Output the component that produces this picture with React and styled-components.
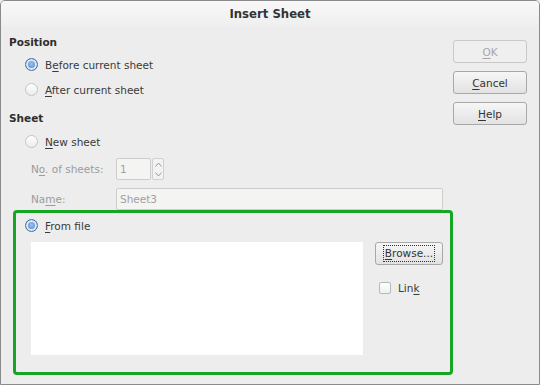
import React from 'react';
import styled, { createGlobalStyle } from 'styled-components';

const GlobalStyle = createGlobalStyle`
  html, body {
    margin: 0;
    padding: 0;
    background: #ededed;
  }
  body {
    font-family: "DejaVu Sans", "Liberation Sans", sans-serif;
    font-size: 10.5px;
    color: #3a3a3a;
  }
`;

const Frame = styled.div`
  width: 540px;
  height: 385px;
  box-sizing: border-box;
  border: 1px solid #8a8a8a;
  border-radius: 5px 5px 0 0;
  background: #ededed;
  overflow: hidden;
  display: flex;
  flex-direction: column;
`;

const TitleBar = styled.div`
  height: 25px;
  flex: none;
  display: flex;
  align-items: center;
  justify-content: center;
  background: linear-gradient(#f8f8f8, #efefef);
  font-weight: bold;
  font-size: 11.7px;
  color: #333;
`;

const Body = styled.div`
  flex: 1;
  display: flex;
`;

const LeftColumn = styled.div`
  width: 452px;
  display: flex;
  flex-direction: column;
`;

const RightColumn = styled.div`
  display: flex;
  flex-direction: column;
  gap: 8px;
  padding-top: 14px;
`;

const Heading = styled.div`
  height: 16px;
  line-height: 16px;
  padding-left: 8px;
  margin-top: ${({ $top }) => $top}px;
  margin-bottom: 2px;
  font-weight: bold;
  color: #2e2e2e;
`;

const OptionRow = styled.label`
  height: 25px;
  display: flex;
  align-items: center;
  gap: 7px;
  padding-left: ${({ $indent }) => $indent ?? 24}px;
  margin-top: ${({ $top }) => $top ?? 0}px;
`;

const Radio = styled.span`
  width: 13px;
  height: 13px;
  box-sizing: border-box;
  border-radius: 50%;
  flex: none;
  border: 1px solid ${({ $on }) => ($on ? '#4a73a8' : '#c4c4c4')};
  background: ${({ $on }) =>
    $on
      ? 'radial-gradient(circle at 50% 45%, #9fc2ee 0, #6a9ad6 45%, #3f70b4 100%)'
      : 'linear-gradient(#ffffff, #ececec)'};
  box-shadow: ${({ $on }) => ($on ? 'inset 0 0 0 2px #dfe9f6' : 'none')};
`;

const Mn = styled.span`
  text-decoration: underline;
  text-underline-offset: 2px;
`;

const FieldRow = styled.div`
  display: flex;
  align-items: center;
  height: 22px;
  padding-left: 30px;
  margin-top: ${({ $top }) => $top}px;
  color: #9c9c9c;
`;

const FieldLabel = styled.span`
  width: 85px;
  flex: none;
`;

const Input = styled.div`
  width: ${({ $w }) => $w}px;
  height: 22px;
  box-sizing: border-box;
  border: 1px solid #cdcdcd;
  border-radius: 2px;
  background: #f4f4f2;
  padding-left: 3px;
  display: flex;
  align-items: center;
  color: #a0a0a0;
`;

const Spinner = styled.div`
  width: 12px;
  height: 22px;
  box-sizing: border-box;
  margin-left: 1px;
  border: 1px solid #d0d0d0;
  border-radius: 2px;
  display: flex;
  flex-direction: column;
  align-items: center;
  justify-content: space-around;
  background: #f2f2f2;
`;

const FromFileBox = styled.div`
  margin-left: 12px;
  width: 440px;
  height: 165px;
  box-sizing: border-box;
  border: 3px solid #17a524;
  border-radius: 4px;
  display: flex;
  flex-direction: column;
`;

const FileArea = styled.div`
  display: flex;
  padding-left: 14px;
  margin-top: 3px;
  gap: 12px;
`;

const FileList = styled.div`
  width: 333px;
  height: 114px;
  background: #ffffff;
  box-shadow: inset 1px 1px 0 #eeeeee;
`;

const SideControls = styled.div`
  display: flex;
  flex-direction: column;
  padding-top: 1px;
`;

const Button = styled.div`
  width: ${({ $w }) => $w ?? 74}px;
  height: 23px;
  box-sizing: border-box;
  border: 1px solid ${({ $disabled }) => ($disabled ? '#c9c9c9' : '#a8a8a8')};
  border-radius: 3px;
  background: ${({ $disabled }) =>
    $disabled ? '#efefef' : 'linear-gradient(#f6f6f6, #e2e2e2)'};
  display: flex;
  align-items: center;
  justify-content: center;
  color: ${({ $disabled }) => ($disabled ? '#a6a6a6' : '#333')};
`;

const Focus = styled.span`
  outline: 1px dotted #333;
  outline-offset: 0;
  padding: 0 1px;
  line-height: 15px;
`;

const CheckRow = styled.label`
  display: flex;
  align-items: center;
  gap: 7px;
  margin-top: 17px;
  padding-left: 4px;
`;

const Checkbox = styled.span`
  width: 12px;
  height: 12px;
  box-sizing: border-box;
  border: 1px solid #b8b8b8;
  border-radius: 2px;
  background: linear-gradient(#ffffff, #f0f0f0);
`;

const Arrow = ({ up }) => (
  <svg width="7" height="5" viewBox="0 0 7 5">
    <path
      d={up ? 'M0.5 4.5 L3.5 1 L6.5 4.5' : 'M0.5 0.5 L3.5 4 L6.5 0.5'}
      fill="none"
      stroke="#9a9a9a"
      strokeWidth="1"
    />
  </svg>
);

export default function App() {
  return (
    <>
      <GlobalStyle />
      <Frame>
        <TitleBar>Insert Sheet</TitleBar>
        <Body>
          <LeftColumn>
            <Heading $top={8}>Position</Heading>
            <OptionRow>
              <Radio $on />
              <span>B<Mn>e</Mn>fore current sheet</span>
            </OptionRow>
            <OptionRow>
              <Radio />
              <span><Mn>A</Mn>fter current sheet</span>
            </OptionRow>
            <Heading $top={8}>Sheet</Heading>
            <OptionRow $top={1}>
              <Radio />
              <span><Mn>N</Mn>ew sheet</span>
            </OptionRow>
            <FieldRow $top={4}>
              <FieldLabel>N<Mn>o</Mn>. of sheets:</FieldLabel>
              <Input $w={35}>1</Input>
              <Spinner>
                <Arrow up />
                <Arrow />
              </Spinner>
            </FieldRow>
            <FieldRow $top={8}>
              <FieldLabel>Na<Mn>m</Mn>e:</FieldLabel>
              <Input $w={327}>Sheet3</Input>
            </FieldRow>
            <FromFileBox>
              <OptionRow $indent={9}>
                <Radio $on />
                <span><Mn>F</Mn>rom file</span>
              </OptionRow>
              <FileArea>
                <FileList />
                <SideControls>
                  <Button $w={68}>
                    <Focus><Mn>B</Mn>rowse...</Focus>
                  </Button>
                  <CheckRow>
                    <Checkbox />
                    <span>Lin<Mn>k</Mn></span>
                  </CheckRow>
                </SideControls>
              </FileArea>
            </FromFileBox>
          </LeftColumn>
          <RightColumn>
            <Button $disabled><span><Mn>O</Mn>K</span></Button>
            <Button><span><Mn>C</Mn>ancel</span></Button>
            <Button><span><Mn>H</Mn>elp</span></Button>
          </RightColumn>
        </Body>
      </Frame>
    </>
  );
}
